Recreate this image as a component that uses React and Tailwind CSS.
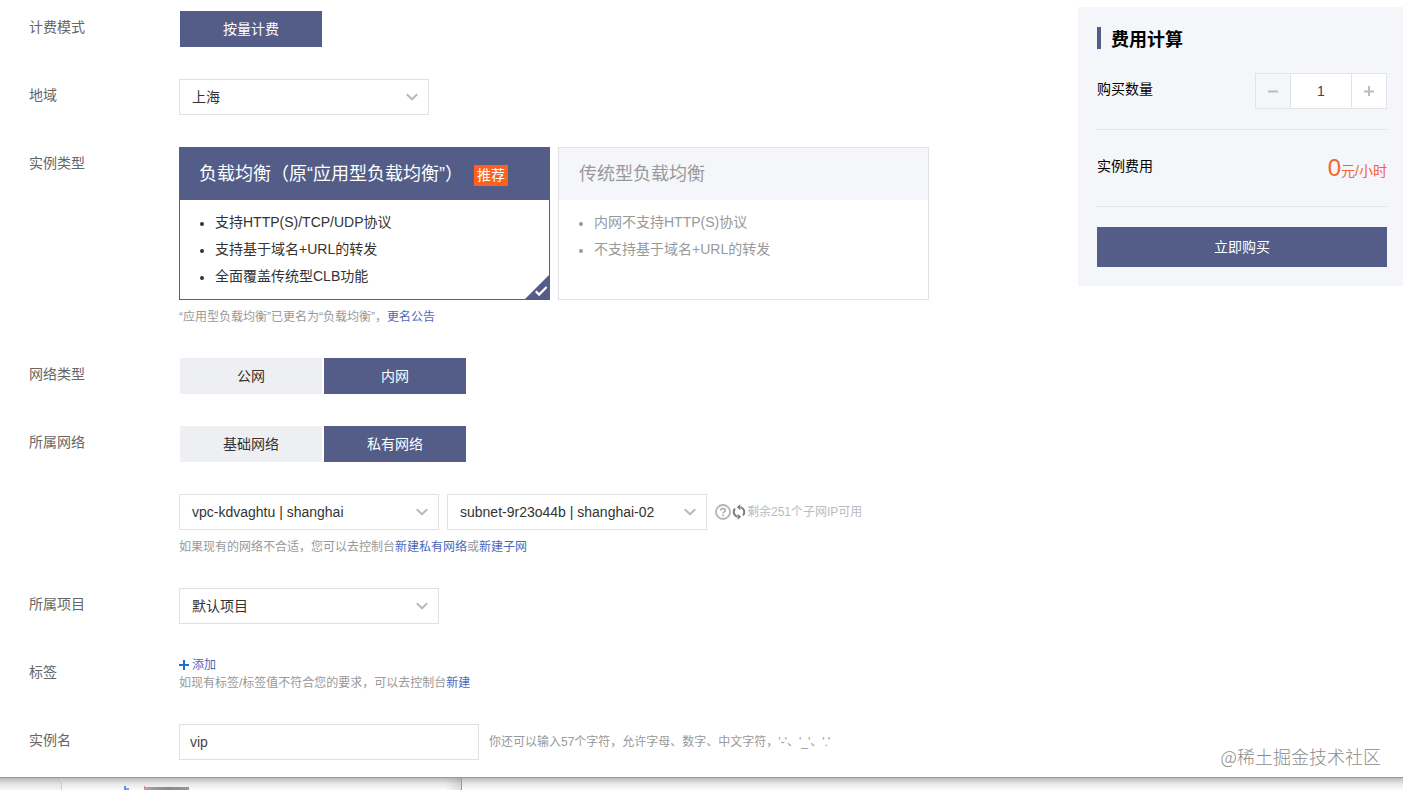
import { useState } from "react";
import clsx from "clsx";

const ChevronIcon = () => (
  <svg width="12" height="8" viewBox="0 0 12 8" fill="none" className="shrink-0">
    <path d="M0.8 1.2L6 6.3L11.2 1.2" stroke="#b8bbc0" strokeWidth="2" />
  </svg>
);

const HelpIcon = () => (
  <svg width="16" height="16" viewBox="0 0 16 16" fill="none" className="shrink-0">
    <circle cx="8" cy="8" r="7" stroke="#b3b5b9" strokeWidth="1.8" />
    <path
      d="M5.7 6.6C5.7 5.2 6.7 4.4 8 4.4C9.3 4.4 10.3 5.2 10.3 6.4C10.3 7.8 8 7.9 8 9.6"
      stroke="#a5a8ad"
      strokeWidth="1.5"
    />
    <rect x="7.2" y="10.6" width="1.6" height="1.6" fill="#a5a8ad" />
  </svg>
);

const RefreshIcon = () => (
  <svg width="14" height="16" viewBox="0 0 14 16" fill="none" className="shrink-0">
    <path d="M5.4 12.9A5.2 5.2 0 0 1 3 4.6" stroke="#7d7d7d" strokeWidth="2" />
    <path d="M8.6 3.1A5.2 5.2 0 0 1 11 11.4" stroke="#7d7d7d" strokeWidth="2" />
    <path d="M8.4 0.2V6.2L4.8 3.2Z" fill="#7d7d7d" />
    <path d="M5.6 15.8V9.8L9.2 12.8Z" fill="#7d7d7d" />
  </svg>
);

const Row = ({ label, children }) => (
  <div className="flex items-start">
    <div className="w-[150px] shrink-0 text-sm leading-8 text-[#666]">{label}</div>
    <div>{children}</div>
  </div>
);

const Select = ({ value, className }) => (
  <button
    className={clsx(
      "flex h-9 items-center justify-between border border-[#dfe1e5] bg-white pr-2.5 pl-3 text-sm text-[#333]",
      className
    )}
  >
    <span>{value}</span>
    <ChevronIcon />
  </button>
);

const Segment = ({ options, value, onChange }) => (
  <div className="flex gap-0.5 pl-px">
    {options.map((option) => (
      <button
        key={option}
        onClick={() => onChange(option)}
        className={clsx(
          "h-9 w-[142px] text-sm",
          option === value ? "bg-[#535d88] text-white" : "bg-[#eeeff2] text-[#333]"
        )}
      >
        {option}
      </button>
    ))}
  </div>
);

const TypeCard = ({ title, tag, items, active }) => (
  <div
    className={clsx(
      "relative h-[153px] w-[371px] border",
      active ? "border-[#535d88] text-[#333]" : "border-[#e0e2e5] text-[#999]"
    )}
  >
    <div
      className={clsx(
        "flex h-[52px] items-center text-lg",
        active ? "bg-[#535d88] pl-[19px] text-white" : "bg-[#f4f6fa] pl-5"
      )}
    >
      <span className="whitespace-nowrap">{title}</span>
      {tag && (
        <span className="mt-0.5 ml-[11px] h-[21px] w-[34px] bg-[#ff5f1f] text-center text-sm leading-[21px]">
          {tag}
        </span>
      )}
    </div>
    <ul className="pt-[9px] pl-5 text-sm leading-[27px]">
      {items.map((item) => (
        <li key={item} className="flex items-center">
          <span className="mt-0.5 mr-[11px] size-1 rounded-full bg-current" />
          {item}
        </li>
      ))}
    </ul>
    {active && (
      <svg width="24" height="24" viewBox="0 0 24 24" className="absolute right-0 bottom-0">
        <path d="M24 0V24H0Z" fill="#535d88" />
        <path d="M10.8 16.2L14.1 19.6L21.6 12" stroke="#fff" strokeWidth="2.2" fill="none" />
      </svg>
    )}
  </div>
);

const Link = ({ children }) => (
  <a href="#" className="text-[#4d68bd]">
    {children}
  </a>
);

const PricePanel = () => {
  const [count, setCount] = useState(1);

  return (
    <aside className="mt-[7px] h-[279px] w-[325px] bg-[#f4f6fa] px-[19px] pr-4 text-sm text-black">
      <h2 className="flex h-[42px] items-end text-lg leading-[22px] font-bold">
        <span className="mr-2.5 h-[22px] w-1 bg-[#535d88]" />
        <span className="-mb-0.5">费用计算</span>
      </h2>
      <div className="mt-6 flex h-[57px] justify-between border-b border-[#e1e4ea]">
        <span className="leading-8">购买数量</span>
        <div className="flex h-9 border border-[#e0e3e8] bg-white text-[#444]">
          <button
            onClick={() => setCount(Math.max(1, count - 1))}
            className="flex w-[35px] items-center justify-center border-r border-[#e0e3e8] bg-[#f4f6fa]"
          >
            <svg width="10" height="10" viewBox="0 0 10 10">
              <path d="M0 5.5H10" stroke="#b9bcc2" strokeWidth="2" />
            </svg>
          </button>
          <span className="w-[60px] text-center leading-[34px]">{count}</span>
          <button
            onClick={() => setCount(count + 1)}
            className="flex w-[35px] items-center justify-center border-l border-[#e0e3e8]"
          >
            <svg width="10" height="10" viewBox="0 0 10 10">
              <path d="M0 5.5H10M5 0V10" stroke="#b9bcc2" strokeWidth="2" />
            </svg>
          </button>
        </div>
      </div>
      <div className="flex h-[77px] justify-between border-b border-[#e1e4ea] pt-5">
        <span className="leading-8">实例费用</span>
        <span className="leading-9 text-[#f2652f]">
          <span className="text-2xl leading-9">0</span>元/小时
        </span>
      </div>
      <button className="mt-5 h-10 w-full bg-[#535d88] text-white">立即购买</button>
    </aside>
  );
};

const App = () => {
  const [network, setNetwork] = useState("内网");
  const [vpc, setVpc] = useState("私有网络");

  return (
    <div className="flex h-[790px] w-[1403px] flex-col overflow-hidden bg-white font-['Liberation_Sans','Noto_Sans_CJK_SC',sans-serif]">
      <div className="relative flex h-[777px] shrink-0 justify-between">
        <div className="flex flex-col gap-8 pt-[11px] pl-[29px]">
          <Row label="计费模式">
            <Segment options={["按量计费"]} value="按量计费" onChange={() => {}} />
          </Row>

          <Row label="地域">
            <Select value="上海" className="w-[250px]" />
          </Row>

          <Row label="实例类型">
            <div className="flex gap-2">
              <TypeCard
                active
                title="负载均衡（原“应用型负载均衡”）"
                tag="推荐"
                items={["支持HTTP(S)/TCP/UDP协议", "支持基于域名+URL的转发", "全面覆盖传统型CLB功能"]}
              />
              <TypeCard
                title="传统型负载均衡"
                items={["内网不支持HTTP(S)协议", "不支持基于域名+URL的转发"]}
              />
            </div>
            <p className="mt-2 text-xs leading-[18px] text-[#999]">
              “应用型负载均衡”已更名为“负载均衡”，<Link>更名公告</Link>
            </p>
          </Row>

          <Row label="网络类型">
            <Segment options={["公网", "内网"]} value={network} onChange={setNetwork} />
          </Row>

          <Row label="所属网络">
            <Segment options={["基础网络", "私有网络"]} value={vpc} onChange={setVpc} />
            <div className="mt-8 flex items-center">
              <Select value="vpc-kdvaghtu | shanghai" className="w-[260px]" />
              <Select value="subnet-9r23o44b | shanghai-02" className="ml-2 w-[260px]" />
              <span className="mr-px ml-2 flex items-center gap-px">
                <HelpIcon />
                <RefreshIcon />
              </span>
              <span className="text-xs text-[#bbb]">剩余251个子网IP可用</span>
            </div>
            <p className="mt-2 text-xs leading-[18px] text-[#999]">
              如果现有的网络不合适，您可以去控制台<Link>新建私有网络</Link>或<Link>新建子网</Link>
            </p>
          </Row>

          <Row label="所属项目">
            <Select value="默认项目" className="w-[260px]" />
          </Row>

          <Row label="标签">
            <div className="flex h-[18px] items-center gap-[3px] text-xs">
              <svg width="10" height="10" viewBox="0 0 10 10">
                <path d="M0 5H10M5 0V10" stroke="#1f6ae0" strokeWidth="2" />
              </svg>
              <Link>添加</Link>
            </div>
            <p className="text-xs leading-[18px] text-[#999]">
              如现有标签/标签值不符合您的要求，可以去控制台<Link>新建</Link>
            </p>
          </Row>

          <Row label="实例名">
            <div className="flex items-center">
              <input
                defaultValue="vip"
                className="h-9 w-[300px] border border-[#dfe1e5] px-2.5 text-sm text-[#444]"
              />
              <span className="ml-2.5 text-xs text-[#999]">
                你还可以输入57个字符，允许字母、数字、中文字符，'-'、'_'、'.'
              </span>
            </div>
          </Row>
        </div>

        <PricePanel />

        <div className="absolute right-[22px] bottom-[9px] font-['Noto_Sans_CJK_SC',sans-serif] text-lg leading-6 font-light text-[#8c8c8c]">
          @稀土掘金技术社区
        </div>
      </div>

      {/* window behind the form */}
      <div className="flex h-[13px] shrink-0 border-t border-[#999] bg-linear-to-b from-[#bdbdbd] via-[#e9e9e9] via-50% to-[#fbfbfb]">
        <div className="w-[62px] border-r border-[#cfcfcf] bg-black/[0.02]" />
        <div className="flex w-[400px] items-end border-r border-[#999] bg-linear-to-r from-transparent from-96% to-black/10 pl-[62px]">
          <span className="h-1 w-0.5 bg-[#5b8ff0]" />
          <span className="h-0.5 w-[3px] bg-[#7ba5f5]" />
          <span className="ml-[15px] h-1 w-px bg-[#c98f85]" />
          <span className="h-[3px] w-11 bg-linear-to-r from-[#a8a8a8] via-[#888] to-[#999]" />
        </div>
      </div>
    </div>
  );
};

export default App;
